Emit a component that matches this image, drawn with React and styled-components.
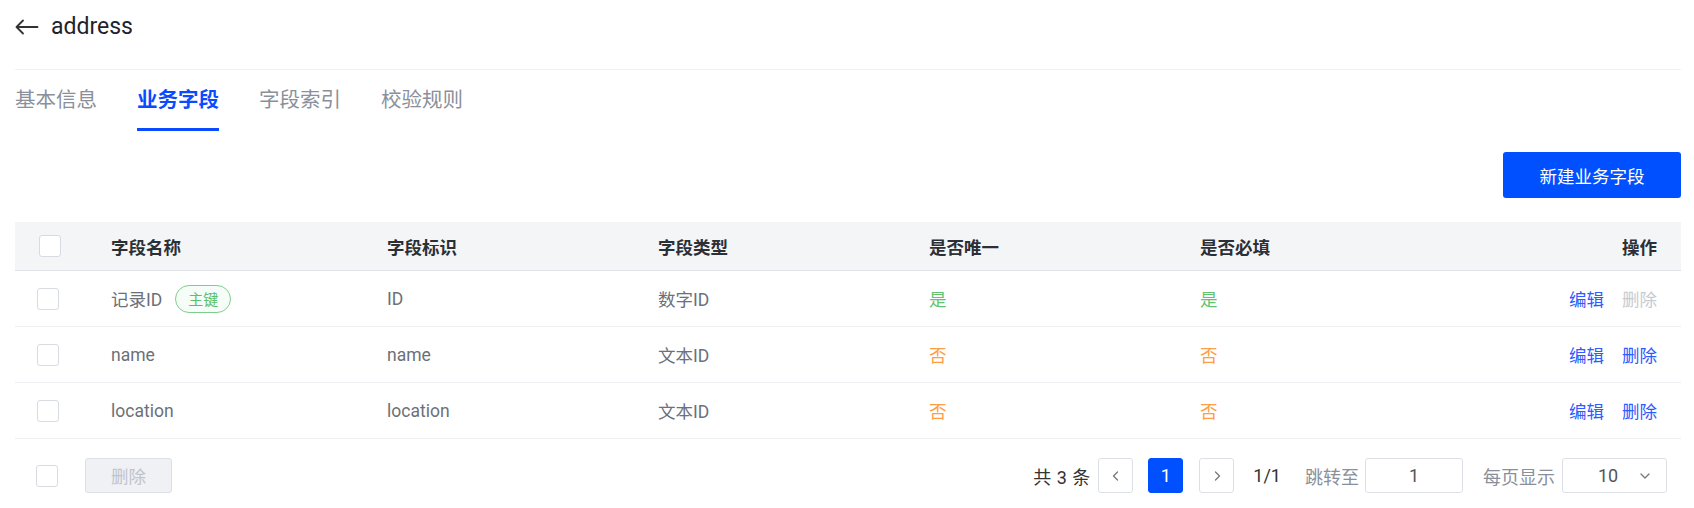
import styled, { createGlobalStyle } from "styled-components";

const GlobalStyle = createGlobalStyle`
  * { box-sizing: border-box; }
  body {
    margin: 0;
    background: #fff;
    font-family: Roboto, "Noto Sans CJK SC", sans-serif;
    color: #333;
  }
`;

const Page = styled.div`
  padding: 0 13px 0 15px;
`;

const Header = styled.div`
  display: flex;
  align-items: center;
  gap: 12px;
  padding: 10px 0 25px;
  line-height: 34px;
  border-bottom: 1px solid #eef0f3;
`;

const Title = styled.span`
  font-size: 23px;
  color: #1f2329;
`;

const Tabs = styled.div`
  display: flex;
  gap: 40px;
`;

const Tab = styled.div`
  padding: 18px 0 16px;
  line-height: 24px;
  font-size: 20.5px;
  font-weight: ${(p) => (p.$active ? 700 : 400)};
  color: ${(p) => (p.$active ? "#0a4bff" : "#8a8f99")};
  border-bottom: 3px solid ${(p) => (p.$active ? "#0a4bff" : "transparent")};
`;

const Toolbar = styled.div`
  display: flex;
  justify-content: flex-end;
  margin-top: 21px;
`;

const PrimaryButton = styled.button`
  width: 178px;
  height: 46px;
  border: none;
  border-radius: 3px;
  background: #0050ff;
  color: #fff;
  font-family: inherit;
  font-size: 17.5px;
`;

const Table = styled.div`
  margin-top: 24px;
`;

const Row = styled.div`
  display: grid;
  grid-template-columns: 96px 276px 271px 271px 271px 271px 1fr;
  align-items: center;
  height: ${(p) => (p.$head ? "49px" : "56px")};
  background: ${(p) => (p.$head ? "#f4f5f7" : "#fff")};
  border-bottom: ${(p) => (p.$head ? "1.5px solid #e1e3e8" : "1.5px solid #eceef1")};
  font-size: 17.5px;
  font-weight: ${(p) => (p.$head ? 700 : 400)};
  color: ${(p) => (p.$head ? "#2b2f36" : "#6b7079")};
`;

const CheckCell = styled.div`
  padding-left: ${(p) => (p.$head ? "24px" : "22px")};
  display: flex;
  align-items: center;
`;

const Checkbox = styled.span`
  display: block;
  flex-shrink: 0;
  width: 22px;
  height: 22px;
  border: 1px solid #d8dbe1;
  border-radius: 3px;
  background: #fff;
`;

const Cell = styled.div`
  display: flex;
  align-items: center;
  gap: 13px;
  white-space: nowrap;
  color: ${(p) => p.$color || "inherit"};
`;

const ActionCell = styled.div`
  display: flex;
  justify-content: flex-end;
  gap: 18px;
  padding-right: 24px;
  white-space: nowrap;
`;

const Tag = styled.span`
  display: inline-flex;
  align-items: center;
  justify-content: center;
  width: 56px;
  height: 28px;
  border: 1.5px solid #7dd08b;
  border-radius: 14px;
  background: #f6fcf7;
  color: #5bbf6b;
  font-size: 15px;
`;

const Link = styled.span`
  color: ${(p) => (p.$disabled ? "#c8cbd1" : "#2d5bff")};
`;

const Footer = styled.div`
  display: flex;
  align-items: center;
  padding: 19px 14px 0 21px;
`;

const GhostButton = styled.button`
  width: 87px;
  height: 35px;
  margin-left: 27px;
  border: 1px solid #dcdfe6;
  border-radius: 3px;
  background: #eff1f4;
  color: #c0c4cc;
  font-family: inherit;
  font-size: 17.5px;
`;

const Pager = styled.div`
  margin-left: auto;
  display: flex;
  align-items: center;
  font-size: 18px;
  color: #333;
`;

const Total = styled.span`
  margin-right: 8px;
  word-spacing: 1px;
`;

const PageBtn = styled.span`
  display: inline-flex;
  align-items: center;
  justify-content: center;
  width: 35px;
  height: 35px;
  margin-right: ${(p) => p.$mr || 0}px;
  border: 1px solid ${(p) => (p.$active ? "#0050ff" : "#dcdfe6")};
  border-radius: 3px;
  background: ${(p) => (p.$active ? "#0050ff" : "#fff")};
  color: ${(p) => (p.$active ? "#fff" : "#666")};
`;

const Muted = styled.span`
  color: #8a8f99;
  margin-right: ${(p) => p.$mr || 0}px;
`;

const Count = styled.span`
  margin-right: 24px;
`;

const Input = styled.span`
  display: inline-flex;
  align-items: center;
  justify-content: center;
  width: 98px;
  height: 35px;
  margin-right: 20px;
  border: 1px solid #dcdfe6;
  border-radius: 3px;
  color: #555;
`;

const Select = styled.span`
  display: inline-flex;
  align-items: center;
  width: 105px;
  height: 35px;
  padding: 0 14px 0 35px;
  justify-content: space-between;
  border: 1px solid #dcdfe6;
  border-radius: 3px;
  color: #555;
`;

const Chevron = ({ dir = "down", size = 14 }) => {
  const d = {
    down: "M3 5l4 4 4-4",
    left: "M8.5 3l-4 4 4 4",
    right: "M5.5 3l4 4-4 4",
  }[dir];
  return (
    <svg width={size} height={size} viewBox="0 0 14 14" fill="none">
      <path d={d} stroke="#777" strokeWidth="1.3" strokeLinecap="round" strokeLinejoin="round" />
    </svg>
  );
};

const BackArrow = () => (
  <svg width="24" height="16" viewBox="0 0 24 16" fill="none">
    <path d="M1.5 8h21M8 1.5L1.5 8 8 14.5" stroke="#333" strokeWidth="1.8" strokeLinecap="round" strokeLinejoin="round" />
  </svg>
);

const GREEN = "#62c26f";
const ORANGE = "#ff9d45";

const rows = [
  { name: "记录ID", primary: true, key: "ID", type: "数字ID", yes: true, canDelete: false },
  { name: "name", key: "name", type: "文本ID", yes: false, canDelete: true },
  { name: "location", key: "location", type: "文本ID", yes: false, canDelete: true },
];

export default function App() {
  return (
    <Page>
      <GlobalStyle />
      <Header>
        <BackArrow />
        <Title>address</Title>
      </Header>
      <Tabs>
        <Tab>基本信息</Tab>
        <Tab $active>业务字段</Tab>
        <Tab>字段索引</Tab>
        <Tab>校验规则</Tab>
      </Tabs>
      <Toolbar>
        <PrimaryButton>新建业务字段</PrimaryButton>
      </Toolbar>
      <Table>
        <Row $head>
          <CheckCell $head>
            <Checkbox />
          </CheckCell>
          <Cell>字段名称</Cell>
          <Cell>字段标识</Cell>
          <Cell>字段类型</Cell>
          <Cell>是否唯一</Cell>
          <Cell>是否必填</Cell>
          <ActionCell>操作</ActionCell>
        </Row>
        {rows.map((r) => (
          <Row key={r.key}>
            <CheckCell>
              <Checkbox />
            </CheckCell>
            <Cell>
              {r.name}
              {r.primary && <Tag>主键</Tag>}
            </Cell>
            <Cell>{r.key}</Cell>
            <Cell>{r.type}</Cell>
            <Cell $color={r.yes ? GREEN : ORANGE}>{r.yes ? "是" : "否"}</Cell>
            <Cell $color={r.yes ? GREEN : ORANGE}>{r.yes ? "是" : "否"}</Cell>
            <ActionCell>
              <Link>编辑</Link>
              <Link $disabled={!r.canDelete}>删除</Link>
            </ActionCell>
          </Row>
        ))}
      </Table>
      <Footer>
        <Checkbox />
        <GhostButton>删除</GhostButton>
        <Pager>
          <Total>共 3 条</Total>
          <PageBtn $mr={15}>
            <Chevron dir="left" />
          </PageBtn>
          <PageBtn $active $mr={16}>1</PageBtn>
          <PageBtn $mr={19}>
            <Chevron dir="right" />
          </PageBtn>
          <Count>1/1</Count>
          <Muted $mr={6}>跳转至</Muted>
          <Input>1</Input>
          <Muted $mr={7}>每页显示</Muted>
          <Select>
            10
            <Chevron />
          </Select>
        </Pager>
      </Footer>
    </Page>
  );
}
